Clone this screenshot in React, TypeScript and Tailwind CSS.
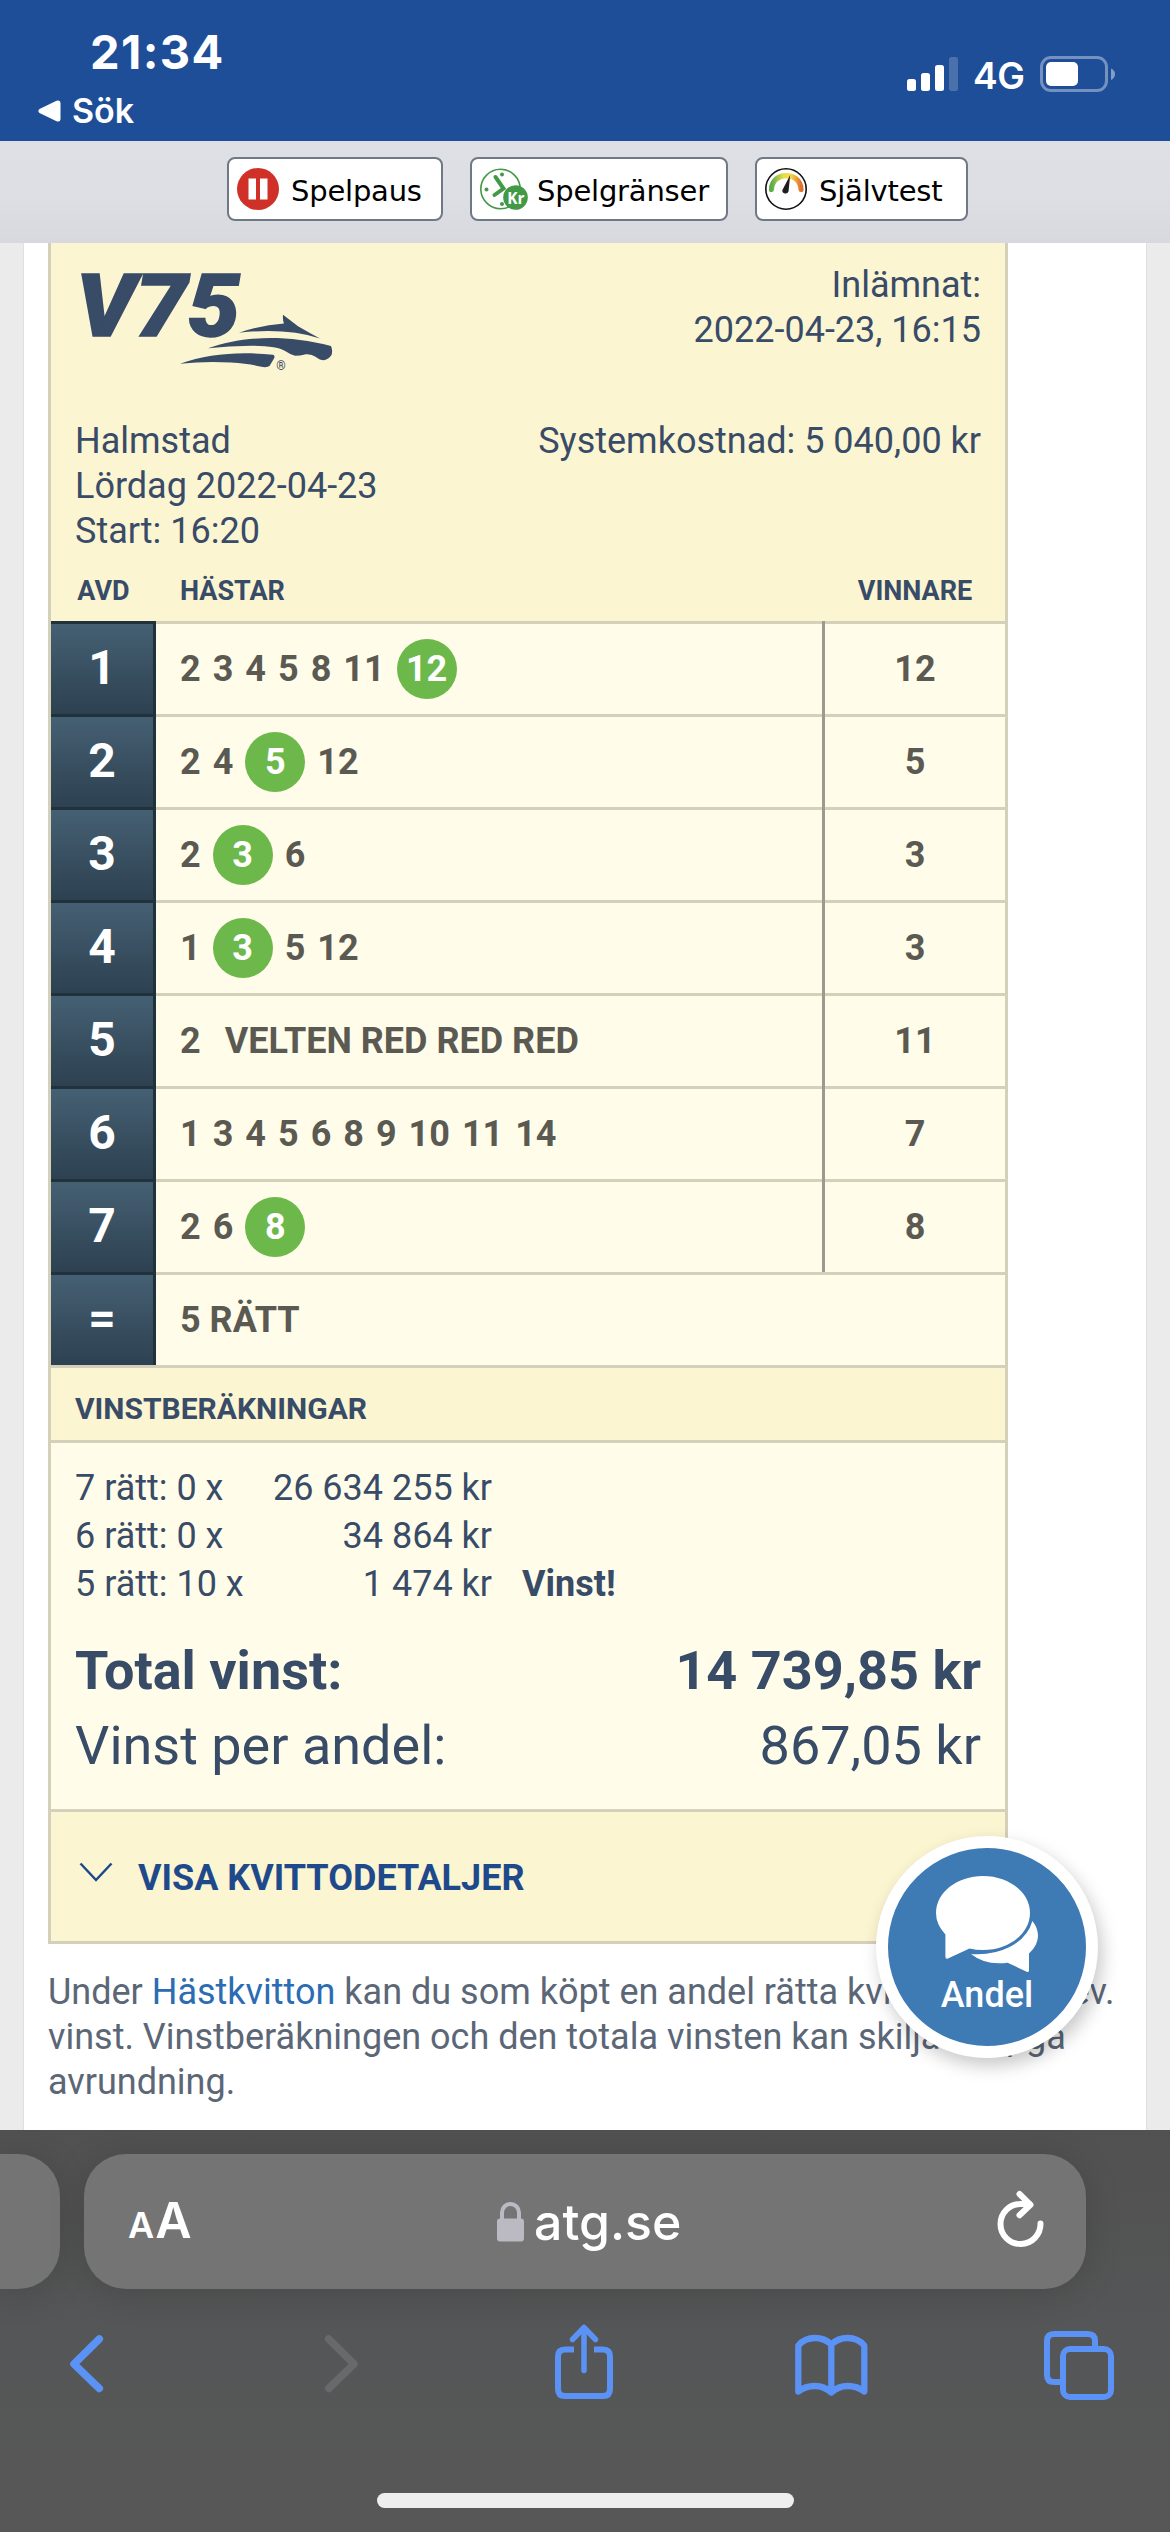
import type { ReactNode } from "react";

type Leg = {
  id: number;
  horses: number[];
  hit?: number;
  note?: string;
  winner: number;
};

const legs: Leg[] = [
  { id: 1, horses: [2, 3, 4, 5, 8, 11, 12], hit: 12, winner: 12 },
  { id: 2, horses: [2, 4, 5, 12], hit: 5, winner: 5 },
  { id: 3, horses: [2, 3, 6], hit: 3, winner: 3 },
  { id: 4, horses: [1, 3, 5, 12], hit: 3, winner: 3 },
  { id: 5, horses: [2], note: "VELTEN RED RED RED", winner: 11 },
  { id: 6, horses: [1, 3, 4, 5, 6, 8, 9, 10, 11, 14], winner: 7 },
  { id: 7, horses: [2, 6, 8], hit: 8, winner: 8 },
];

const payouts = [
  { label: "7 rätt: 0 x", amount: "26 634 255 kr", win: false },
  { label: "6 rätt: 0 x", amount: "34 864 kr", win: false },
  { label: "5 rätt: 10 x", amount: "1 474 kr", win: true },
];

function StatusBar() {
  return (
    <header className="flex h-[141px] shrink-0 justify-between bg-[#1f4e98] font-['Inter',sans-serif] text-white">
      <div className="pt-[23px] pl-[38px]">
        <div className="pl-[52px] text-[47px] leading-[57px] font-bold tracking-[1.4px]">21:34</div>
        <div className="mt-[10px] flex items-center gap-[11px]">
          <svg width="23" height="22" viewBox="0 0 23 22" fill="currentColor">
            <path d="M1.5 9 18.5.8Q22.5-.5 22.5 3v16q0 3.500-4 2.200L1.500 13Q-.8 11 1.500 9Z" />
          </svg>
          <span className="text-[34px] leading-[42px] font-semibold">Sök</span>
        </div>
      </div>
      <div className="mt-[56px] flex h-[36px] items-center pr-[55px]">
        <svg width="51" height="34" viewBox="0 0 51 34" fill="currentColor">
          <rect x="0" y="22" width="9" height="12" rx="2.500" />
          <rect x="14" y="16" width="9" height="18" rx="2.500" />
          <rect x="28" y="8" width="9" height="26" rx="2.500" />
          <rect x="42" y="0" width="9" height="34" rx="2.500" opacity=".2" />
        </svg>
        <span className="ml-[15px] w-[53px] pt-[3px] text-[37px] leading-[36px] font-semibold tracking-[-0.5px]">4G</span>
        <svg className="ml-[14px]" width="75" height="36" viewBox="0 0 75 36" fill="currentColor">
          <rect x="1.500" y="1.500" width="65" height="33" rx="9.500" fill="none" stroke="currentColor" strokeWidth="3" opacity=".38" />
          <rect x="6" y="6" width="32" height="24" rx="5" />
          <path d="M71 12.500q4 1.500 4 5.500t-4 6Z" opacity=".45" />
        </svg>
      </div>
    </header>
  );
}

function PauseIcon() {
  return (
    <svg width="42" height="42" viewBox="0 0 42 42">
      <circle cx="21" cy="21" r="21" fill="#cf3129" />
      <path d="M11.500 10.500h7.500v21h-7.500zM23 10.500h7.500v21H23z" fill="#fff" />
    </svg>
  );
}

function LimitIcon() {
  return (
    <svg width="48" height="42" viewBox="0 0 48 42">
      <circle cx="20.500" cy="21" r="19.700" fill="#fff" stroke="#429946" strokeWidth="1.600" />
      <path d="M15.500 9 23.500 20.500l-9 6.500" fill="none" stroke="#429946" strokeWidth="4" strokeLinecap="round" />
      <circle cx="6.500" cy="21.500" r="2" fill="#429946" />
      <circle cx="22" cy="6.500" r="2" fill="#429946" />
      <circle cx="22" cy="36" r="2" fill="#429946" />
      <circle cx="35.500" cy="29.500" r="12.300" fill="#429946" />
      <text x="35.800" y="35.500" textAnchor="middle" fontSize="15.500" fontWeight="700" fill="#fff" fontFamily="Open Sans, sans-serif">
        Kr
      </text>
    </svg>
  );
}

function GaugeIcon() {
  return (
    <svg width="42" height="42" viewBox="0 0 42 42">
      <defs>
        <linearGradient id="gauge" x1="0" x2="1" y1="0" y2="0">
          <stop offset="0" stopColor="#5cab4a" />
          <stop offset=".4" stopColor="#e2e04a" />
          <stop offset=".65" stopColor="#f6dc47" />
          <stop offset="1" stopColor="#e0702e" />
        </linearGradient>
      </defs>
      <circle cx="21" cy="21" r="20.200" fill="#fff" stroke="#111" strokeWidth="1.600" />
      <path d="M6.500 21.500C7 3 35.500 3 36 21.500" fill="none" stroke="url(#gauge)" strokeWidth="5.200" strokeLinecap="round" />
      <path d="M25.200 7 23.500 23.500a3.200 3.200 0 0 1-6.200-1.200Z" fill="#1d1d1b" />
    </svg>
  );
}

function ToolButton({ icon, label, className }: { icon: ReactNode; label: string; className: string }) {
  return (
    <button className={`flex h-[64px] items-center rounded-[8px] border-2 border-[#6f7985] bg-white pl-[8px] ${className}`}>
      {icon}
      <span className="pt-[3px] text-[29px] leading-[36px] tracking-[-0.2px] text-black">{label}</span>
    </button>
  );
}

function V75Logo() {
  return (
    <svg className="-mt-[11px]" width="264" height="122" viewBox="72 252 264 122" fill="#384b67">
      <text x="76" y="335.500" fontSize="87" fontWeight="900" fontStyle="italic" textLength="164" lengthAdjust="spacingAndGlyphs" fontFamily="Roboto, sans-serif" stroke="#384b67" strokeWidth="1.500">
        V75
      </text>
      <path d="M239 332.700q22-7.500 45-9.200-1.500-3-1-8.800l15 11.500q12 7 22 12.200-34-10.800-81-5.700Z" />
      <path d="M208 348.300c33-12 76-14.500 123-2.300q2 5 .5 9-3 4.500-7.500 5.200-4 0-8.500-3.500-4-3-9.500-2.500-6 1.500-11 1.500-4-.7-9-4.200-9-6-35-5.800-22 0-43 2.600Z" />
      <path d="M180 363.700c28-9.500 57-12.500 93-9q2.500 1 1 3.800l-4.500 7.500q-2 1.500-6.500 1-12-3-32-4.500-26-1.500-51 1.200Z" />
      <text x="281" y="369.500" fontSize="12" textAnchor="middle" fontFamily="Roboto, sans-serif">
        ®
      </text>
    </svg>
  );
}

function Hit({ children }: { children: ReactNode }) {
  return (
    <span className="flex size-[60px] items-center justify-center rounded-full bg-[#6db84b] text-white">{children}</span>
  );
}

function LegCell({ children }: { children: ReactNode }) {
  return (
    <div className="flex w-[105px] items-center justify-center border-t-3 border-r-3 border-[#20333d] bg-linear-to-b from-[#456073] to-[#2d4151] text-[48px] leading-[50px] font-bold text-white">
      <span className="-mt-[2px]">{children}</span>
    </div>
  );
}

function LegRow({ leg }: { leg: Leg }) {
  return (
    <div className="flex h-[93px]">
      <LegCell>{leg.id}</LegCell>
      <div className="flex flex-1 items-center gap-[12px] border-t-3 border-[#d5d0ba] pl-[24px]">
        {leg.horses.map((h) => (h === leg.hit ? <Hit key={h}>{h}</Hit> : <span key={h}>{h}</span>))}
        {leg.note && <span className="ml-[12px]">{leg.note}</span>}
      </div>
      <div className="w-[3px] bg-[#9b9990]" />
      <div className="flex w-[180px] items-center justify-center border-t-3 border-[#d5d0ba]">{leg.winner}</div>
    </div>
  );
}

function Receipt() {
  return (
    <section className="w-[960px] border-x-3 border-b-3 border-[#d5d0ba] bg-[#fffdea] text-[36px] leading-[45px] text-[#384b67]">
      <div className="h-[378px] bg-[#fcf5d2]">
        <div className="flex h-[176px] justify-between px-[21px] pt-[20px]">
          <V75Logo />
          <div className="pr-[3px] text-right">
            <p>Inlämnat:</p>
            <p>2022-04-23, 16:15</p>
          </div>
        </div>
        <div className="flex justify-between px-[24px]">
          <div>
            <p>Halmstad</p>
            <p>Lördag 2022-04-23</p>
            <p>Start: 16:20</p>
          </div>
          <p>Systemkostnad: 5 040,00 kr</p>
        </div>
        <div className="mt-[17px] flex text-[27px] leading-[40px] font-bold">
          <span className="w-[105px] text-center">AVD</span>
          <span className="flex-1 pl-[24px]">HÄSTAR</span>
          <span className="w-[180px] text-center">VINNARE</span>
        </div>
      </div>

      <div className="font-bold text-[#5b5a52]">
        {legs.map((leg) => (
          <LegRow key={leg.id} leg={leg} />
        ))}
        <div className="flex h-[93px]">
          <LegCell>=</LegCell>
          <div className="flex flex-1 items-center border-t-3 border-[#d5d0ba] pl-[24px]">5 RÄTT</div>
        </div>
      </div>

      <h2 className="h-[75px] border-t-3 border-[#d5d0ba] bg-[#fcf5d2] px-[24px] pt-[23px] text-[30px] leading-[36px] font-bold">
        VINSTBERÄKNINGAR
      </h2>

      <div className="h-[369px] border-t-3 border-[#d5d0ba] px-[24px] pt-[21px]">
        {payouts.map((p) => (
          <div key={p.label} className="flex leading-[48px]">
            <span className="w-[180px]">{p.label}</span>
            <span className="w-[237px] text-right">{p.amount}</span>
            {p.win && <strong className="ml-[30px] font-bold">Vinst!</strong>}
          </div>
        ))}
        <div className="mt-[25px] flex justify-between text-[54px] leading-[75px] font-bold">
          <span>Total vinst:</span>
          <span>14 739,85 kr</span>
        </div>
        <div className="flex justify-between text-[54px] leading-[75px]">
          <span>Vinst per andel:</span>
          <span>867,05 kr</span>
        </div>
      </div>

      <button className="flex h-[132px] w-full items-center border-t-3 border-[#d5d0ba] bg-[#fcf5d2] pl-[28px] font-bold text-[#1e4a8c]">
        <svg className="mt-[-10px]" width="34" height="20" viewBox="0 0 34 20" fill="none" stroke="currentColor" strokeWidth="2.500">
          <path d="M1.500 1.500 17 18 32.500 1.500" />
        </svg>
        <span className="ml-[25px] pt-[3px]">VISA KVITTODETALJER</span>
      </button>
    </section>
  );
}

function ChatButton() {
  return (
    <button className="absolute top-[1593px] left-[876px] flex size-[222px] flex-col items-center rounded-full border-12 border-white bg-[#3e7ab4] pt-[27px] shadow-[4px_8px_18px_rgba(0,0,0,0.22)]">
      <svg width="104" height="98" viewBox="935 1874 104 98" fill="#fff">
        <path d="M983 1875c26 0 47 16.500 47 37s-21 37-47 37q-7 0-13.500-1.600l-21.500 10.200q-2.500 1-2.600-1.800V1933.500q-9.400-10-9.400-21.500c0-20.500 21-37 47-37Z" />
        <path d="M1032.400 1920q5.600 7 5.600 15 0 9-9 17.500v17q0 2-2.300 1.200l-19.200-9q-22 3-36.500-8.700 22 1.500 38.500-7 18-9 22.900-26Z" />
      </svg>
      <span className="text-[36px] leading-[45px] font-medium text-white">Andel</span>
    </button>
  );
}

function SafariBar() {
  return (
    <footer className="flex h-[402px] shrink-0 flex-col bg-linear-to-b from-[#515151] via-[#555657] to-[#575757] pt-[24px] font-['Inter',sans-serif] text-white">
      <div className="flex gap-[24px]">
        <div className="h-[135px] w-[60px] rounded-r-[42px] bg-[#747474] shadow-[0_4px_36px_rgba(0,0,0,0.15)]" />
        <div className="flex h-[135px] w-[1002px] items-center rounded-[42px] bg-[#747474] pl-[44px] shadow-[0_4px_36px_rgba(0,0,0,0.15)]">
          <div className="flex w-[368px] items-baseline gap-px pt-[2px] leading-[60px] font-semibold">
            <span className="text-[36px]">A</span>
            <span className="text-[50px]">A</span>
          </div>
          <svg width="29" height="40" viewBox="0 0 29 40">
            <rect x="1" y="16.500" width="27" height="23" rx="3" fill="#bbbac2" />
            <path d="M6 18v-7.500a8.500 8.500 0 0 1 17 0V18" fill="none" stroke="#bbbac2" strokeWidth="4" />
          </svg>
          <span className="ml-[9px] text-[50px] leading-[60px] font-medium">atg.se</span>
          <svg className="-mt-[6px] mr-[42px] ml-auto" width="47" height="58" viewBox="997 2190 47 58" fill="none" stroke="currentColor" strokeWidth="6" strokeLinecap="round" strokeLinejoin="round">
            <path d="M1040.500 2223.500a20 20 0 1 1-20-19.500h9" />
            <path d="m1019.500 2194 11 10.800-11 10.400" />
          </svg>
        </div>
      </div>
      <nav className="mt-[35px] flex h-[76px] items-start pl-[69px] text-[#5b92f6]">
        <svg className="mt-[10px]" width="35" height="60" viewBox="69 2334 35 60" fill="none" stroke="currentColor" strokeWidth="7.500" strokeLinecap="round" strokeLinejoin="round">
          <path d="M99.300 2339 74 2364l25.300 24.500" />
        </svg>
        <svg className="mt-[10px] ml-[220px]" width="35" height="60" viewBox="324 2334 35 60" fill="none" stroke="#69696b" strokeWidth="7.500" strokeLinecap="round" strokeLinejoin="round">
          <path d="m328.700 2339 25.300 25-25.300 24.500" />
        </svg>
        <svg className="ml-[195px]" width="60" height="76" viewBox="554 2323 60 76" fill="none" stroke="currentColor" strokeWidth="6" strokeLinejoin="round">
          <path d="M574 2348.500h-9q-7 0-7 7v32.500q0 7 7 7h38q7 0 7-7v-32.500q0-7-7-7h-9" />
          <path d="M584 2328v41.500M572.500 2338.500l11.500-12 11.500 12" strokeLinecap="round" strokeWidth="5.500" />
        </svg>
        <svg className="mt-[9px] ml-[180px]" width="75" height="64" viewBox="794 2332 75 64" fill="none" stroke="currentColor" strokeWidth="6.300" strokeLinecap="round" strokeLinejoin="round">
          <path d="M831.300 2343.500q-6.500-6.500-16.500-6.500t-16.500 7.500v46q7-5.500 16.500-5.500t16.500 6.500q7-6.500 16.500-6.500t16.500 5.500v-46q-6.500-7.500-16.500-7.500t-16.500 6.500v48" />
        </svg>
        <svg className="mt-[6px] ml-[174px]" width="72" height="72" viewBox="1043 2329 72 72" fill="none" stroke="currentColor" strokeWidth="6">
          <path d="M1062 2381h-8q-7 0-7-7v-34q0-7 7-7h34q7 0 7 7v8" />
          <rect x="1063" y="2348" width="48" height="48" rx="7" />
        </svg>
      </nav>
      <div className="mx-auto mt-[93px] h-[15px] w-[417px] rounded-full bg-[#eee]" />
    </footer>
  );
}

export default function App() {
  return (
    <div className="flex h-[2532px] w-[1170px] flex-col overflow-hidden font-['Roboto',sans-serif]">
      <StatusBar />
      <div className="flex h-[102px] shrink-0 gap-[27px] bg-linear-to-b from-[#dfe0e5] via-[#dedfe4] to-[#d8d9de] pt-[16px] pl-[227px] font-['DejaVu_Sans',sans-serif]">
        <ToolButton icon={<PauseIcon />} label="Spelpaus" className="w-[216px] gap-[12px]" />
        <ToolButton icon={<LimitIcon />} label="Spelgränser" className="w-[258px] gap-[9px]" />
        <ToolButton icon={<GaugeIcon />} label="Självtest" className="w-[213px] gap-[12px]" />
      </div>
      <main className="relative h-[1887px] shrink-0 overflow-hidden bg-[#ebebeb] px-[23px]">
        <div className="h-full border-x border-[#e0e0e0] bg-white pl-[24px]">
          <Receipt />
          <p className="mt-[26px] w-[1080px] text-[36px] leading-[45px] whitespace-nowrap text-[#5b6676]">
            Under <a className="text-[#2b6cb3]">Hästkvitton</a> kan du som köpt en andel rätta kvittot och se ev.
            <br />
            vinst. Vinstberäkningen och den totala vinsten kan skilja sig pga
            <br />
            avrundning.
          </p>
        </div>
        <ChatButton />
      </main>
      <SafariBar />
    </div>
  );
}
